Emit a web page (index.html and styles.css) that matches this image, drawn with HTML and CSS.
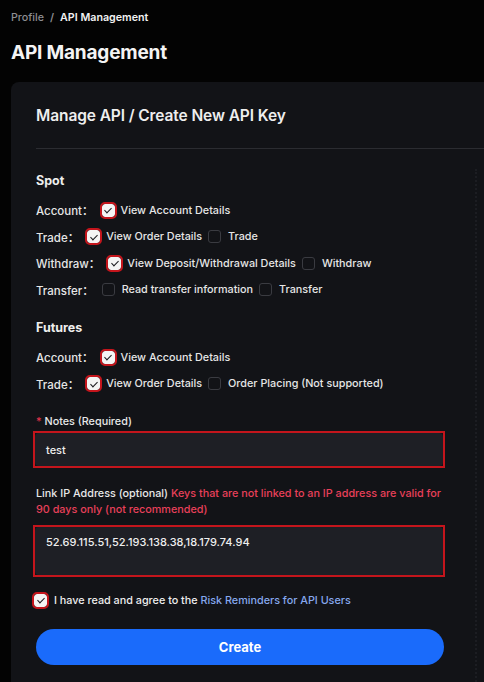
FILE: index.html
```html
<!DOCTYPE html>
<html lang="en">
<head>
<meta charset="utf-8">
<title>API Management</title>
<link rel="stylesheet" href="styles.css">
</head>
<body>
<div class="page">
  <nav class="crumbs"><span class="crumb-muted">Profile</span><span class="crumb-sep">/</span><span class="crumb-current">API Management</span></nav>
  <h1 class="page-title">API Management</h1>
  <section class="card">
    <h2 class="card-title">Manage API / Create New API Key</h2>
    <div class="divider"></div>
    <div class="card-body">
      <form class="form">
        <h3 class="group-title">Spot</h3>
        <div class="perm-row"><span class="perm-label">Account：</span><span class="cb checked hl"></span><span class="opt">View Account Details</span></div>
        <div class="perm-row"><span class="perm-label">Trade：</span><span class="cb checked hl"></span><span class="opt">View Order Details</span><span class="cb"></span><span class="opt">Trade</span></div>
        <div class="perm-row"><span class="perm-label">Withdraw：</span><span class="cb checked hl"></span><span class="opt">View Deposit/Withdrawal Details</span><span class="cb"></span><span class="opt">Withdraw</span></div>
        <div class="perm-row"><span class="perm-label">Transfer：</span><span class="cb"></span><span class="opt">Read transfer information</span><span class="cb"></span><span class="opt">Transfer</span></div>

        <h3 class="group-title futures">Futures</h3>
        <div class="perm-row"><span class="perm-label">Account：</span><span class="cb checked hl"></span><span class="opt">View Account Details</span></div>
        <div class="perm-row"><span class="perm-label">Trade：</span><span class="cb checked hl"></span><span class="opt">View Order Details</span><span class="cb"></span><span class="opt">Order Placing (Not supported)</span></div>

        <label class="field-label notes-label"><span class="req">*</span> Notes (Required)</label>
        <div class="hl-field notes-field"><div class="input">test</div></div>

        <p class="field-label ip-label">Link IP Address (optional) <span class="warn">Keys that are not linked to an IP address are valid for 90 days only (not recommended)</span></p>
        <div class="hl-field ip-field"><div class="input textarea">52.69.115.51,52.193.138.38,18.179.74.94</div></div>

        <div class="agree"><span class="cb checked hl"></span><span class="agree-text">I have read and agree to the <a class="link">Risk Reminders for API Users</a></span></div>

        <button type="button" class="btn-create">Create</button>
      </form>
      <div class="side"></div>
    </div>
  </section>
</div>
</body>
</html>
```

FILE: styles.css
```css
* { box-sizing: border-box; }
html, body { margin: 0; padding: 0; }
body {
  background: #030303;
  color: #ececec;
  font-family: Inter, "Noto Sans", "Noto Sans CJK SC", sans-serif;
  width: 484px;
  height: 682px;
  overflow: hidden;
}
.page { padding: 11px 0 0 11px; }
.crumbs { font-size: 10.7px; line-height: 14px; font-weight: 600; display: flex; }
.crumb-muted { color: #8d8d92; font-weight: 500; }
.crumb-sep { color: #8d8d92; margin: 0 6px; }
.crumb-current { color: #f2f2f2; }
.page-title {
  margin: 15px 0 0;
  font-size: 19px;
  line-height: 26px;
  font-weight: 700;
  color: #f4f4f4;
  letter-spacing: -0.2px;
}
.card {
  margin-top: 16px;
  width: 500px;
  background: #121317;
  border-radius: 8px 0 0 0;
  padding: 24px 0 30px 25px;
  height: 620px;
}
.card-title {
  margin: 0;
  font-size: 15.5px;
  line-height: 20px;
  font-weight: 600;
  color: #eeeeee;
  letter-spacing: -0.1px;
}
.divider { height: 1px; background: #2b2c31; margin-top: 22px; }
.card-body { display: flex; }
.form { width: 409px; display: flex; flex-direction: column; }
.side { margin-left: 30px; margin-top: 20px; border-left: 2px dotted #1c1d22; height: 520px; }
.group-title {
  margin: 23px 0 0;
  font-size: 12.5px;
  line-height: 18px;
  font-weight: 700;
  color: #eeeeee;
}
.group-title.futures { margin-top: 16px; }
.group-title + .perm-row { margin-top: 7px; }
.perm-row {
  display: flex;
  align-items: center;
  height: 26.5px;
  font-size: 10.8px;
  font-weight: 500;
  color: #e6e6e6;
  white-space: nowrap;
}
.perm-label { margin-right: 8px; font-size: 11.5px; }
.cb {
  width: 13px;
  height: 13px;
  flex: none;
  border: 1px solid #3a3b41;
  border-radius: 3px;
  margin-right: 7px;
  position: relative;
}
.cb.checked { background: #f4f4f4; border-color: #f4f4f4; }
.cb.checked::after {
  content: "";
  position: absolute;
  left: 3.5px;
  top: 1.5px;
  width: 3px;
  height: 6px;
  border: solid #1a1a1e;
  border-width: 0 1.5px 1.5px 0;
  transform: rotate(45deg);
}
.cb.hl { outline: 2px solid #c4151c; outline-offset: 0.5px; }
.cb.hl + .opt { margin-left: -1px; }
.opt { margin-right: 6px; }
.field-label {
  margin: 0;
  font-size: 10.8px;
  line-height: 16px;
  font-weight: 500;
  color: #e8e8e8;
}
.notes-label { margin-top: 17px; }
.req { color: #e8344c; }
.hl-field {
  margin-left: -3px;
  width: 412px;
  border: 2px solid #c4151c;
}
.notes-field { margin-top: 1px; height: 37px; }
.input {
  height: 100%;
  background: #1e1f25;
  border-radius: 4px;
  font-size: 11px;
  font-weight: 500;
  color: #eeeeee;
  padding: 0 11px;
  display: flex;
  align-items: center;
}
.input.textarea { align-items: flex-start; padding-top: 8px; }
.ip-label { margin-top: 18px; }
.warn { color: #e8405a; }
.ip-field { margin-top: 7px; height: 52px; }
.agree {
  margin-top: 15px;
  display: flex;
  align-items: center;
  height: 16px;
  margin-left: -2px;
}
.agree .cb { margin-right: 7px; }
.agree-text { font-size: 10.8px; font-weight: 500; color: #eeeeee; }
.link { color: #86a8ee; }
.btn-create {
  margin-top: 21px;
  height: 36px;
  width: 408px;
  border: none;
  border-radius: 18px;
  background: #1a6bfb;
  color: #ffffff;
  font-family: inherit;
  font-size: 13px;
  font-weight: 700;
}
```
